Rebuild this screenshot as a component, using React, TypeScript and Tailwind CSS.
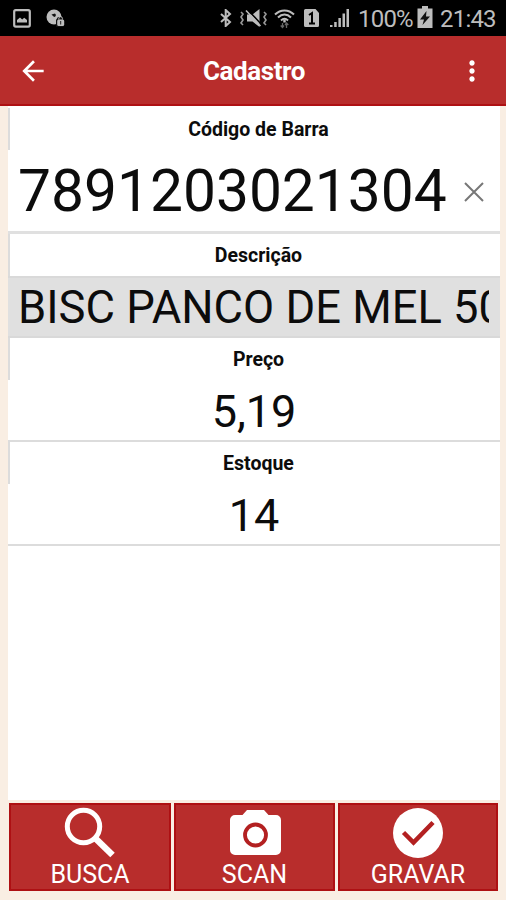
import type { ReactNode } from 'react';
import { MdArrowBack, MdMoreVert } from 'react-icons/md';

interface FieldLabelProps {
  children: ReactNode;
}

interface ActionButtonProps {
  icon: ReactNode;
  label: string;
  className: string;
}

function FieldLabel({ children }: FieldLabelProps) {
  return (
    <label className="flex h-[42px] items-center justify-center border-l-2 border-[#dcdcdc] pt-[1px] pl-[7px] text-[19.5px] font-bold text-[#0c0c0c]">
      {children}
    </label>
  );
}

function ActionButton({ icon, label, className }: ActionButtonProps) {
  return (
    <button
      type="button"
      className={`flex h-[88px] flex-col items-center border-2 border-[#ae1013] bg-[#b82d2c] pt-[2px] text-white ${className}`}
    >
      {icon}
      <span className="mt-[3px] text-[25px] leading-[26px]">{label}</span>
    </button>
  );
}

function SearchIcon() {
  return (
    <svg className="shrink-0" width="52" height="52" viewBox="0 0 52 52" fill="none" stroke="currentColor">
      <circle cx="19.500" cy="19.500" r="16.200" strokeWidth="5" />
      <path d="M31 31l17.500 17" strokeWidth="6.500" />
    </svg>
  );
}

function CameraIcon() {
  return (
    <svg className="shrink-0" width="52" height="52" viewBox="0 0 52 52">
      <path
        d="M18 3h17l4.500 5H47a5 5 0 0 1 5 5v30a5 5 0 0 1-5 5H6a5 5 0 0 1-5-5V13a5 5 0 0 1 5-5h7.500z"
        fill="currentColor"
      />
      <circle cx="26.500" cy="28" r="10.500" fill="none" stroke="#b32021" strokeWidth="3.800" />
    </svg>
  );
}

function CheckIcon() {
  return (
    <svg className="shrink-0" width="52" height="52" viewBox="0 0 52 52" fill="none">
      <circle cx="26" cy="26" r="25" fill="currentColor" />
      <path d="M11.500 25.500L21.500 35.500L41 15.500" stroke="#b32021" strokeWidth="4.500" />
    </svg>
  );
}

function StatusBar() {
  return (
    <div className="flex h-9 items-center bg-black text-[#bdbdbd]">
      <svg className="ml-[13px]" width="18" height="19" viewBox="0 0 18 19" fill="none">
        <rect x="1.2" y="1.2" width="15.6" height="16.4" rx="1.5" stroke="currentColor" strokeWidth="2.2" />
        <path d="M4 13.5V11l3-2.5 2.200 2 2-1.800L14 11v2.500z" fill="currentColor" />
      </svg>
      <svg className="ml-[15px]" width="19" height="18" viewBox="0 0 19 18">
        <circle cx="8" cy="8" r="7.500" fill="currentColor" />
        <path d="M5.500 5.500l3.500-1 1 1.500-1 2-1.500-.5z" fill="#111" />
        <path d="M10 11l2-3h4.500l1 2V18H10z" fill="#111" />
        <rect x="11.200" y="10.500" width="7" height="6.500" rx="1.500" fill="currentColor" />
        <path d="M12.800 10.500V9.500a1.800 1.800 0 0 1 3.600 0v1" stroke="currentColor" fill="none" />
        <path d="M14.700 12v3.500" stroke="#222" />
      </svg>

      <svg className="ml-[155px]" width="12" height="18" viewBox="0 0 12 18" fill="none" stroke="currentColor" strokeWidth="2">
        <path d="M1 5l9 8-4.300 4V1L10 5l-9 8" />
      </svg>
      <svg className="ml-[7px]" width="29" height="20" viewBox="0 0 29 20" fill="none">
        <path d="M2 4l2 2-2 3 2 3-2 3 2 2M25 4l2 2-2 3 2 3-2 3 2 2" stroke="#999" strokeWidth="1.600" />
        <path d="M8 6.500h5.500L20.500 1v18l-7-5.500H8z" fill="currentColor" />
        <path d="M9 2l13 14" stroke="#000" strokeWidth="1.500" />
        <path d="M7 2.500l14.500 15.500" stroke="currentColor" strokeWidth="1.500" />
      </svg>
      <svg className="ml-[6px]" width="21" height="21" viewBox="0 0 21 21" fill="none" stroke="currentColor" strokeWidth="2">
        <path d="M1 6.500C6.500 1 14.500 1 20 6.500M4 9.500c4-4 9-4 13 0M7 12.500c2.200-2.200 4.800-2.200 7 0" />
        <path d="M10.500 11.500v3" strokeWidth="2.500" />
        <path d="M8.500 20v-5M12.500 15v5M6.700 17.500l1.800 2 1.500-2M11 17l1.500-2 1.800 2" stroke="#666" strokeWidth="1.300" />
      </svg>
      <svg className="ml-[9px]" width="16" height="20" viewBox="0 0 16 20">
        <path d="M1.500 1h10L15 5v12.500a1.500 1.500 0 0 1-1.500 1.500h-12A1.500 1.500 0 0 1 0 17.500v-15A1.500 1.500 0 0 1 1.500 1z" fill="currentColor" />
        <path d="M5 7l3-2v10.500M5 15.500h6" stroke="#000" strokeWidth="2" fill="none" />
      </svg>
      <svg className="ml-[10px]" width="20" height="20" viewBox="0 0 20 20" fill="currentColor">
        <path d="M0 17h2.500v2H0zM4.200 14h2.500v5H4.200zM8.400 10h2.500v9H8.400zM12.500 5.500H15V19h-2.500zM16.500 1H19v18h-2.500z" />
      </svg>
      <span className="ml-[8px] w-[57px] pt-[1px] text-[24px] leading-9 tracking-[-0.8px] whitespace-nowrap">100%</span>
      <svg className="-mt-[3px] ml-[2px]" width="16" height="22" viewBox="0 0 16 22">
        <path d="M5 0h6v2.500h4.500V22H.5V2.500H5z" fill="currentColor" />
        <path d="M9.500 5L3 13.500h4L5.500 19 13 10.500H9z" fill="#111" />
      </svg>
      <span className="ml-[7px] pt-[1px] text-[24px] leading-9 tracking-[-0.8px]">21:43</span>
    </div>
  );
}

export default function App() {
  return (
    <div className="flex h-[900px] w-[506px] flex-col overflow-hidden bg-[#f9eee3] font-[Roboto,sans-serif]">
      <StatusBar />

      <header className="flex h-[70px] items-center border-b-2 border-[#ae1013] bg-[#b82d2c] pt-[2px] text-white">
        <MdArrowBack className="ml-[17px] size-8" />
        <h1 className="flex-1 pl-[3px] text-center text-[26px] font-bold tracking-[-0.4px]">Cadastro</h1>
        <MdMoreVert className="mr-[18px] size-8" />
      </header>

      <main className="mr-[6px] ml-2 h-[694px] bg-white pt-[2px] text-[#0c0c0c]">
        <FieldLabel>Código de Barra</FieldLabel>
        <div className="flex h-[84px] items-center border-b-3 border-[#e0e0e0]">
          <span className="ml-[10px] w-[430px] pt-[1px] text-[58.7px] leading-[80px] whitespace-nowrap">7891203021304</span>
          <svg className="mt-[2px] ml-[16px]" width="20" height="20" viewBox="0 0 20 20" stroke="#777" strokeWidth="2">
            <path d="M1 1l18 18M19 1L1 19" />
          </svg>
        </div>

        <FieldLabel>Descrição</FieldLabel>
        <div className="h-[62px] border-y-2 border-[#d9d9d9] bg-[#e0e0e0] pr-[11px] pl-[10px]">
          <div className="overflow-hidden text-[45.3px] leading-[59px] whitespace-nowrap">BISC PANCO DE MEL 500G</div>
        </div>

        <FieldLabel>Preço</FieldLabel>
        <div className="h-[62px] border-b-2 border-[#dcdcdc] text-center text-[45px] leading-[63px]">5,19</div>

        <FieldLabel>Estoque</FieldLabel>
        <div className="h-[62px] border-b-2 border-[#dcdcdc] text-center text-[45px] leading-[63px]">14</div>
      </main>

      <footer className="mt-[3px] mr-[8px] ml-[9px] flex gap-[3px]">
        <ActionButton icon={<SearchIcon />} label="BUSCA" className="w-[162px]" />
        <ActionButton icon={<CameraIcon />} label="SCAN" className="w-[161px]" />
        <ActionButton icon={<CheckIcon />} label="GRAVAR" className="w-[160px]" />
      </footer>
    </div>
  );
}
